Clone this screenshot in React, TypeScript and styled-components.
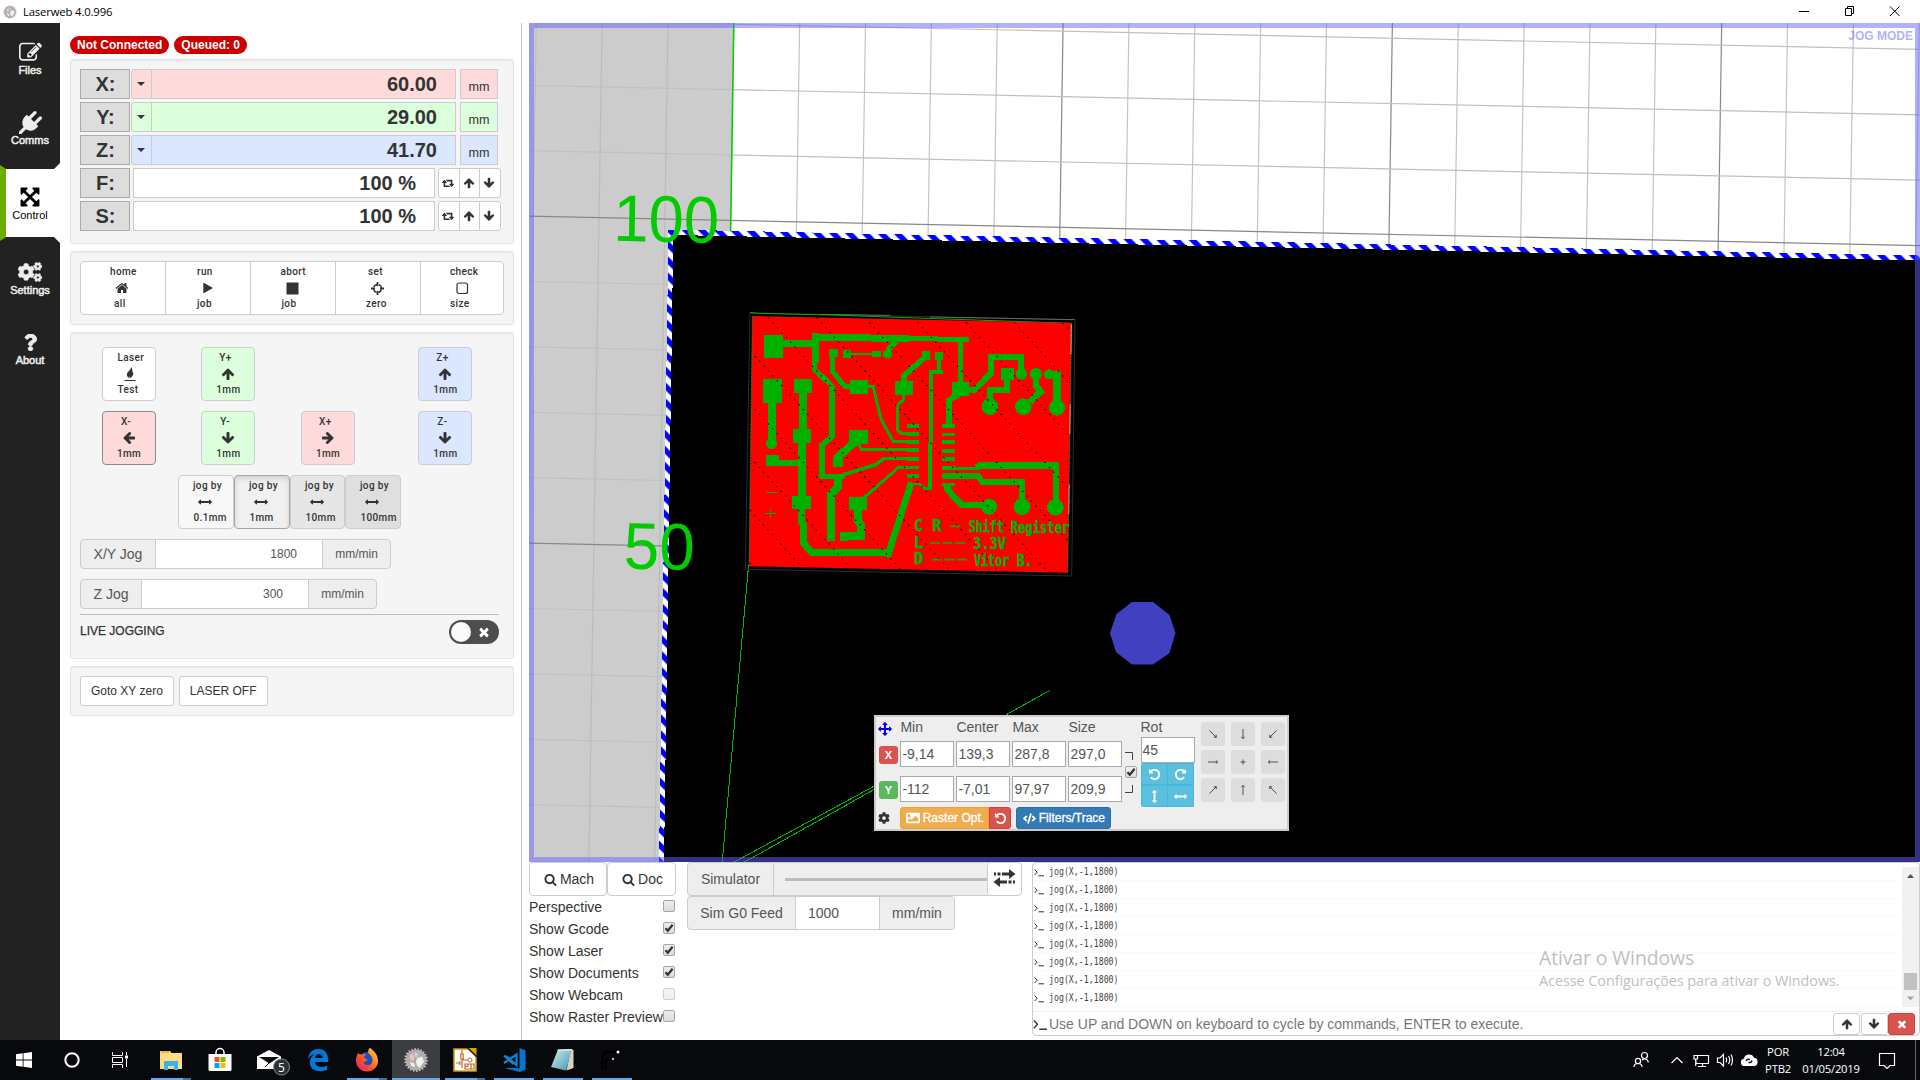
import React from "react";
import styled, { createGlobalStyle, css } from "styled-components";
import { FaCogs, FaCog, FaQuestion, FaImage, FaCode } from "react-icons/fa";

const GlobalStyle = createGlobalStyle`
  *, *::before, *::after { box-sizing: border-box; }
  body {
    margin: 0;
    background: #fff;
    color: #333;
    font: 14px/20px "Liberation Sans", Arial, sans-serif;
    overflow: hidden;
  }
`;

/* ---------- glyphs ---------- */

const glyphs = {
  up: "M1675 971q0 51-37 90l-75 75q-38 38-91 38-54 0-90-38l-294-293v704q0 52-37.5 84.5t-90.5 32.5h-128q-53 0-90.5-32.5t-37.5-84.5v-704l-294 293q-36 38-90 38t-90-38l-75-75q-38-38-38-90 0-53 38-91l651-651q35-37 90-37 54 0 91 37l651 651q37 39 37 91z",
  play: "M1576 927l-1328 738q-23 13-39.5 3t-16.500-36v-1472q0-26 16.500-36t39.500 3l1328 738q23 13 23 31t-23 31z",
  search:
    "M1216 832q0-185-131.500-316.500t-316.500-131.500-316.500 131.500-131.500 316.500 131.500 316.500 316.500 131.500 316.500-131.500 131.500-316.500zm512 832q0 52-38 90t-90 38q-54 0-90-38l-343-342q-179 124-399 124-143 0-273.500-55.500t-225-150-150-225-55.500-273.500 55.500-273.500 150-225 225-150 273.500-55.500 273.500 55.500 225 150 150 225 55.500 273.500q0 220-124 399l343 343q37 37 37 90z",
  times:
    "M1490 1322q0 40-28 68l-136 136q-28 28-68 28t-68-28l-294-294-294 294q-28 28-68 28t-68-28l-136-136q-28-28-28-68t28-68l294-294-294-294q-28-28-28-68t28-68l136-136q28-28 68-28t68 28l294 294 294-294q28-28 68-28t68 28l136 136q28 28 28 68t-28 68l-294 294 294 294q28 28 28 68z",
  home: "M1472 992v480q0 26-19 45t-45 19h-384v-384h-256v384h-384q-26 0-45-19t-19-45v-480q0-1 .5-3t.5-3l575-474 575 474q1 2 1 6zm223-69l-62 74q-8 9-21 11h-3q-13 0-21-7l-692-577-692 577q-12 8-24 7-13-2-21-11l-62-74q-8-10-7-23.500t11-21.500l719-599q32-26 76-26t76 26l244 204v-195q0-14 9-23t23-9h192q14 0 23 9t9 23v408l219 182q10 8 11 21.500t-7 23.500z",
  arrows:
    "M1792 896q0 26-19 45l-256 256q-19 19-45 19t-45-19-19-45v-128h-384v384h128q26 0 45 19t19 45-19 45l-256 256q-19 19-45 19t-45-19l-256-256q-19-19-19-45t19-45 45-19h128v-384h-384v128q0 26-19 45t-45 19-45-19l-256-256q-19-19-19-45t19-45l256-256q19-19 45-19t45 19 19 45v128h384v-384h-128q-26 0-45-19t-19-45 19-45l256-256q19-19 45-19t45 19l256 256q19 19 19 45t-19 45-45 19h-128v384h384v-128q0-26 19-45t45-19 45 19l256 256q19 19 19 45z",
  arrowsH:
    "M1792 896q0 26-19 45l-256 256q-19 19-45 19t-45-19-19-45v-128h-1024v128q0 26-19 45t-45 19-45-19l-256-256q-19-19-19-45t19-45l256-256q19-19 45-19t45 19 19 45v128h1024v-128q0-26 19-45t45-19 45 19l256 256q19 19 19 45z",
  expand:
    "M1411 541l-355 355 355 355 144-144q29-31 70-14 39 17 39 59v448q0 26-19 45t-45 19h-448q-42 0-59-40-17-39 14-69l144-144-355-355-355 355 144 144q31 30 14 69-17 40-59 40h-448q-26 0-45-19t-19-45v-448q0-42 40-59 39-17 69 14l144 144 355-355-355-355-144 144q-19 19-45 19-12 0-24-5-40-17-40-59v-448q0-26 19-45t45-19h448q42 0 59 40 17 39-14 69l-144 144 355 355 355-355-144-144q-31-30-14-69 17-40 59-40h448q26 0 45 19t19 45v448q0 42-39 59-13 5-25 5-26 0-45-19z",
  plug: "M1755 453q37 38 37 90.500t-37 90.500l-401 400 150 150-160 160q-163 163-389.500 186.500t-411.500-100.500l-362 362h-181v-181l362-362q-124-185-100.500-411.500t186.500-389.500l160-160 150 150 400-401q38-37 91-37t90 37 37 90.500-37 90.500l-400 401 234 234 401-400q38-37 91-37t90 37z",
  undo: "M1664 896q0 156-61 298t-164 245-245 164-298 61q-172 0-327-72.500t-264-204.500q-7-10-6.500-22.500t8.500-20.500l137-138q10-9 25-9 16 2 23 12 73 95 179 147t225 52q104 0 198.500-40.500t163.500-109.500 109.500-163.500 40.500-198.500-40.500-198.500-109.500-163.500-163.500-109.500-198.500-40.500q-98 0-188 35.500t-160 101.500l137 138q31 30 14 69-17 40-59 40h-448q-26 0-45-19t-19-45v-448q0-42 40-59 39-17 69 14l130 129q107-101 244.500-156.500t284.500-55.500q156 0 298 61t245 164 164 245 61 298z",
  edit: "M888 1184l116-116-152-152-116 116v56h96v96h56zm440-720q-16-16-33 1l-350 350q-17 17-1 33t33-1l350-350q17-17 1-33zm80 594v190q0 119-84.500 203.500t-203.500 84.500h-832q-119 0-203.500-84.500t-84.500-203.500v-832q0-119 84.500-203.500t203.500-84.500h832q63 0 117 25 15 7 18 23 3 17-9 29l-49 49q-14 14-32 8-23-6-45-6h-832q-66 0-113 47t-47 113v832q0 66 47 113t113 47h832q66 0 113-47t47-113v-126q0-13 9-22l64-64q15-15 35-7t20 29zm-96-738l288 288-672 672h-288v-288zm444 132l-92 92-288-288 92-92q28-28 68-28t68 28l152 152q28 28 28 68t-28 68z",
  retweet:
    "M1280 1504q0 13-9.500 22.500t-22.500 9.500h-960q-8 0-13.500-2t-9-7-5.500-8-3-11.500-1-11.500v-600h-192q-26 0-45-19t-19-45q0-24 15-41l320-384q19-22 49-22t49 22l320 384q15 17 15 41 0 26-19 45t-45 19h-192v384h576q16 0 25 11l160 192q7 11 7 21zm640-416q0 24-15 41l-320 384q-20 23-49 23t-49-23l-320-384q-15-17-15-41 0-26 19-45t45-19h192v-384h-576q-16 0-25-12l-160-192q-7-9-7-20 0-13 9.500-22.500t22.500-9.500h960q8 0 13.500 2t9 7 5.500 8 3 11.500 1 11.500v600h192q26 0 45 19t19 45z",
};
type GlyphName = keyof typeof glyphs;

const GlyphSvg = styled.svg<{ $turn: number; $mirror?: boolean }>`
  display: block;
  flex: none;
  fill: currentColor;
  transform: ${(p) => (p.$mirror ? "scaleX(-1)" : `rotate(${p.$turn}deg)`)};
`;
const Glyph = ({ name, size = 12, turn = 0, mirror }: { name: GlyphName; size?: number; turn?: number; mirror?: boolean }) => (
  <GlyphSvg $turn={turn} $mirror={mirror} width={size} height={size} viewBox={name === "retweet" ? "0 0 1920 1792" : "0 0 1792 1792"}>
    <path d={glyphs[name]} />
  </GlyphSvg>
);

/* ---------- window frame ---------- */

const Window = styled.div`
  width: 1920px;
  height: 1080px;
  display: grid;
  grid-template-rows: 23px 1017px 40px;
  overflow: hidden;
`;
const TitleBar = styled.header`
  display: flex;
  align-items: center;
  padding: 0 0 0 2px;
  background: #fff;
  color: #000;
  font: 11.3px/22px "Open Sans", "Noto Sans", sans-serif;
`;
const TitleText = styled.span`
  margin-left: 5px;
  letter-spacing: -0.15px;
  flex: 1;
`;
const WindowControls = styled.div`
  display: flex;
  width: 138px;
  svg { width: 46px; height: 22px; }
`;
const Body = styled.div`
  display: flex;
  min-height: 0;
`;

/* ---------- sidebar ---------- */

const Sidebar = styled.nav`
  width: 60px;
  background: #222;
  display: flex;
  flex-direction: column;
`;
const SideItem = styled.div<{ $h: number; $top: number }>`
  height: ${(p) => p.$h}px;
  padding-top: ${(p) => p.$top}px;
  display: flex;
  flex-direction: column;
  align-items: center;
  gap: 0;
  color: #eee;
  font-size: 11px;
  line-height: 14px;
  -webkit-text-stroke: 0.5px currentColor;
`;
const ActiveItem = styled(SideItem)`
  color: #000;
  background: linear-gradient(#fff, #fff);
  clip-path: polygon(0 2px, 6px 6px, 54px 6px, 60px 0, 60px 80px, 54px 74px, 6px 74px, 0 78px);
  border-left: 6px solid #6aaf00;
  padding-right: 6px;
  -webkit-text-stroke: 0;
`;
const SideIcon = styled.span`
  height: 24px;
  margin-bottom: -1px;
  display: grid;
  place-items: center;
`;

/* ---------- control pane ---------- */

const ControlPane = styled.section`
  width: 462px;
  border-right: 1px solid #c8c8c8;
  padding: 13px 7px 0 10px;
  background: #fff;
`;
const Badges = styled.div`
  display: flex;
  gap: 5px;
  margin-bottom: 5px;
`;
const Badge = styled.span`
  height: 18px;
  padding: 0 7px;
  border-radius: 9px;
  background: #c00;
  color: #fff;
  font: bold 12px/18px "Liberation Sans", Arial, sans-serif;
`;
const Well = styled.div<{ $h: number }>`
  height: ${(p) => p.$h}px;
  margin-bottom: 7px;
  padding: 9px;
  border: 1px solid #e3e3e3;
  border-radius: 3px;
  background: #f5f5f5;
  box-shadow: inset 0 1px 1px rgba(0, 0, 0, 0.05);
`;
const AxisRow = styled.div`
  display: flex;
  height: 30px;
  margin-bottom: 3px;
`;
const AxisLabel = styled.div`
  width: 50px;
  padding-left: 1px;
  border: 1px solid #aaa;
  background: #ddd;
  font: bold 20px/28px "Liberation Sans", Arial, sans-serif;
  text-align: center;
`;
const AxisDrop = styled.div<{ $bg: string }>`
  width: 21px;
  margin-left: 1px;
  padding-right: 2px;
  border: 1px solid #ccc;
  border-radius: 3px 0 0 3px;
  background: ${(p) => p.$bg};
  display: grid;
  place-items: center;
  &::after {
    content: "";
    border: 4px solid transparent;
    border-top-color: #333;
    border-bottom: 0;
  }
`;
const AxisValue = styled.div<{ $bg: string; $w: number; $gap: number }>`
  width: ${(p) => p.$w}px;
  margin-left: ${(p) => p.$gap}px;
  padding-right: 18px;
  border: 1px solid #ccc;
  background: ${(p) => p.$bg};
  font: bold 20px/28px "Liberation Sans", Arial, sans-serif;
  text-align: right;
`;
const AxisUnit = styled.div<{ $bg: string }>`
  width: 38px;
  margin-left: 4px;
  border: 1px solid #ccc;
  background: ${(p) => p.$bg};
  font-size: 12.6px;
  line-height: 34px;
  text-align: center;
`;
const ButtonGroup = styled.div`
  display: flex;
  margin-left: 3px;
`;
const TinyButton = styled.div`
  width: 21.6px;
  height: 30px;
  margin-right: -1px;
  padding-right: 1px;
  border: 1px solid #ccc;
  background: #fff;
  display: grid;
  place-items: center;
  &:first-child { border-radius: 3px 0 0 3px; }
  &:last-child { border-radius: 0 3px 3px 0; margin-right: 0; }
`;

const stampFont = css`
  font: 500 10px/16px Roboto, "Liberation Sans", sans-serif;
  letter-spacing: 0.35px;
`;
const Stamp = styled.div<{ $w?: number; $bg?: string; $edge?: string; $pressed?: boolean }>`
  width: ${(p) => p.$w ?? 54}px;
  height: 54px;
  padding-top: 2.4px;
  border: 1px solid ${(p) => p.$edge ?? "#ccc"};
  border-radius: 4px;
  background: ${(p) => p.$bg ?? "#fff"};
  box-shadow: ${(p) => (p.$pressed ? "inset 0 3px 5px rgba(0,0,0,.125)" : "none")};
  ${stampFont}
`;
const StampLine = styled.div<{ $start: number }>`
  height: 16px;
  padding-left: ${(p) => p.$start}px;
  display: flex;
  align-items: center;
  white-space: nowrap;
`;
const JobBar = styled.div`
  display: flex;
  width: 424px;
  ${Stamp} { border-radius: 0; margin-right: -1px; padding-top: 2px; }
  ${Stamp}:first-child { border-radius: 4px 0 0 4px; }
  ${Stamp}:last-child { border-radius: 0 4px 4px 0; }
`;
const JogGrid = styled.div`
  display: grid;
  grid-template-columns: 99.3px 99.7px 117.3px 54px;
  grid-template-rows: 54px 54px;
  row-gap: 10px;
  padding: 5px 0 0 22px;
`;
const Blank = styled.span``;
const StepRow = styled.div`
  display: flex;
  margin: 10px 0 10px 98px;
`;
const InputGroup = styled.div<{ $h?: number }>`
  display: flex;
  height: ${(p) => p.$h ?? 30}px;
  width: max-content;
  border: 1px solid #ccc;
  border-radius: 4px;
  background: #eee;
  color: #555;
  overflow: hidden;
`;
const Addon = styled.div<{ $w: number; $small?: boolean }>`
  width: ${(p) => p.$w}px;
  display: flex;
  align-items: center;
  justify-content: center;
  font-size: ${(p) => (p.$small ? 12 : 14)}px;
`;
const Field = styled.div<{ $w: number; $left?: boolean }>`
  width: ${(p) => p.$w}px;
  padding: 0 ${(p) => (p.$left ? 12 : 25)}px 1px;
  border: solid #ccc;
  border-width: 0 1px;
  background: #fff;
  display: flex;
  align-items: center;
  justify-content: ${(p) => (p.$left ? "flex-start" : "flex-end")};
  font-size: ${(p) => (p.$left ? 14 : 12)}px;
`;
const FeedRows = styled.div`
  display: grid;
  gap: 10px;
`;
const LiveRow = styled.div`
  margin-top: 5px;
  width: 419px;
  height: 31px;
  border-top: 1px solid #bbb;
  display: flex;
  justify-content: space-between;
  padding-top: 5px;
  font-size: 12px;
  line-height: 23px;
  -webkit-text-stroke: 0.25px currentColor;
`;
const Toggle = styled.div`
  width: 50px;
  height: 24px;
  padding: 2px 8px 2px 2px;
  border-radius: 12px;
  background: #4d4d4d;
  color: #fff;
  display: flex;
  align-items: center;
  justify-content: space-between;
  &::before {
    content: "";
    width: 20px;
    height: 20px;
    border-radius: 50%;
    background: #fafafa;
  }
`;
const MacroRow = styled.div`
  display: flex;
  gap: 5px;
`;
const Button = styled.div`
  height: 30px;
  padding: 0 10px;
  border: 1px solid #ccc;
  border-radius: 3px;
  background: #fff;
  font-size: 12px;
  line-height: 29px;
  color: #333;
`;

/* ---------- workspace ---------- */

const Workspace = styled.main`
  width: 1398px;
  padding-left: 7px;
  display: grid;
  grid-template-rows: 839px 178px;
`;
const Viewport = styled.div`
  position: relative;
  width: 1391px;
  height: 839px;
  overflow: hidden;
`;
const Scene = styled.svg`
  display: block;
`;
const ModeFrame = styled.div`
  position: absolute;
  inset: 0;
  border: 5px solid rgba(100, 100, 255, 0.5);
  padding: 1px 2px;
  color: rgba(100, 100, 255, 0.5);
  font: bold 12px/15px "Liberation Sans", Arial, sans-serif;
  text-align: right;
`;

const TransformPanel = styled.div`
  position: absolute;
  left: 345px;
  top: 692px;
  width: 415px;
  height: 116px;
  padding: 0 0 0 2px;
  border: 2px solid #ccc;
  background: #eee;
  display: flex;
  font-size: 14px;
  color: #555;
`;
const AxisTable = styled.div`
  width: 244px;
  display: grid;
  grid-template-columns: 20.4px repeat(4, 54px);
  grid-template-rows: 24px 26px 9px 26px 5px 22px;
  column-gap: 2px;
`;
const Head = styled.div`
  line-height: 20px;
`;
const Corner = styled.div<{ $color: string }>`
  display: flex;
  align-items: center;
  color: ${(p) => p.$color};
`;
const AxisTag = styled.div<{ $bg: string }>`
  width: 19px;
  height: 18px;
  margin-top: 5px;
  margin-left: 1px;
  border-radius: 3px;
  background: ${(p) => p.$bg};
  color: #fff;
  font: bold 11px/18px "Liberation Sans", Arial, sans-serif;
  text-align: center;
`;
const NumberBox = styled.div`
  height: 26px;
  padding-left: 1px;
  border: 1px solid #a9a9a9;
  background: #fff;
  line-height: 24px;
`;
const Gap = styled.div`
  grid-column: 1 / -1;
`;
const RasterRow = styled.div`
  grid-column: 2 / -1;
  display: flex;
`;
const ColorButton = styled.div<{ $bg: string; $edge: string; $w: number; $r: string; $ml?: number }>`
  width: ${(p) => p.$w}px;
  height: 22px;
  margin-left: ${(p) => p.$ml ?? 0}px;
  border: 1px solid ${(p) => p.$edge};
  border-radius: ${(p) => p.$r};
  background: ${(p) => p.$bg};
  color: #fff;
  display: flex;
  align-items: center;
  justify-content: center;
  gap: 3px;
  font-size: 12px;
  white-space: nowrap;
  -webkit-text-stroke: 0.3px #fff;
`;
const LinkColumn = styled.div`
  width: 18.5px;
  padding: 35px 0 0 3px;
  color: #333;
  display: flex;
  flex-direction: column;
  gap: 5.5px;
`;
const RotColumn = styled.div`
  width: 54px;
  margin-right: 6px;
`;
const RotGrid = styled.div`
  display: grid;
  grid-template-columns: 26px 27px;
  border-radius: 3px;
  overflow: hidden;
`;
const AlignGrid = styled.div`
  display: grid;
  grid-template-columns: repeat(3, 24px);
  grid-auto-rows: 24px;
  gap: 4px 6px;
  padding-top: 5px;
`;
const AlignButton = styled.div`
  border-radius: 3px;
  background: #ddd;
  display: grid;
  place-items: center;
  svg { display: block; }
`;

/* ---------- bottom dock ---------- */

const Dock = styled.div`
  display: grid;
  grid-template-columns: 147px 335px 888px;
  column-gap: 11px;
  justify-content: start;
`;
const ZoomButtons = styled.div`
  display: flex;
`;
const ZoomButton = styled.div<{ $w: number }>`
  width: ${(p) => p.$w}px;
  height: 34px;
  padding-left: 2px;
  border: 1px solid #ccc;
  border-radius: 4px;
  display: flex;
  align-items: center;
  justify-content: center;
  gap: 3px;
  color: #333;
`;
const CheckRow = styled.div`
  height: 22px;
  display: flex;
  justify-content: space-between;
  align-items: center;
  line-height: 22px;
  white-space: nowrap;
`;
const Box = styled.span<{ $faint?: boolean }>`
  flex: none;
  width: 12px;
  height: 12px;
  margin: 0 1px 2px 0;
  border: 1px solid ${(p) => (p.$faint ? "#d0d0d0" : "#a5a5a5")};
  border-radius: 2px;
  background: linear-gradient(${(p) => (p.$faint ? "#f5f5f5, #efefef" : "#eee, #dcdcdc")});
  svg { display: block; margin: -1px; }
`;
const Slider = styled.div`
  width: 214px;
  padding-left: 11px;
  border-left: 1px solid #ccc;
  display: flex;
  align-items: center;
  &::after {
    content: "";
    flex: 1;
    height: 3px;
    background: #bbb;
  }
`;
const SwapButton = styled.div`
  width: 34px;
  padding: 0 1px 2px 0;
  border-left: 1px solid #ccc;
  border-radius: 4px;
  background: #fff;
  display: grid;
  place-items: center;
`;
const Console = styled.div`
  width: 888px;
  margin-left: -1px;
  height: 174px;
  border: 1px solid #ccc;
  border-radius: 4px;
  display: grid;
  grid-template-rows: 149px 23px;
`;
const LogArea = styled.div`
  display: flex;
  justify-content: space-between;
  padding-top: 0;
  border-bottom: 1px dotted #e4e4e4;
`;
const Log = styled.div`
  width: 866px;
`;
const LogLine = styled.div`
  height: 18px;
  padding: 0 0 0 1px;
  border-bottom: 1px solid #fafafa;
  display: flex;
  align-items: center;
  gap: 5px;
  color: #333;
`;
const LogText = styled.span`
  font: 9.6px/16px "DejaVu Sans Mono", monospace;
  color: #444;
  transform: scaleX(0.86);
  transform-origin: left;
`;
const Scrollbar = styled.div`
  width: 17px;
  height: 140px;
  margin-top: 4px;
  background: #f1f1f1;
`;
const Prompt = styled.div`
  display: flex;
  align-items: center;
  padding-left: 0;
  color: #777;
`;
const PromptText = styled.span`
  flex: 1;
  margin-left: 2px;
`;
const HistoryButton = styled.div<{ $danger?: boolean }>`
  width: 27px;
  height: 22px;
  margin-right: ${(p) => (p.$danger ? 4 : 0.5)}px;
  border: 1px solid ${(p) => (p.$danger ? "#d43f3a" : "#ccc")};
  border-radius: 3px;
  background: ${(p) => (p.$danger ? "#d9534f" : "#fff")};
  color: ${(p) => (p.$danger ? "#fff" : "#333")};
  display: grid;
  place-items: center;
`;
const Watermark = styled.div`
  position: absolute;
  left: 1539px;
  top: 944px;
  color: #bfbfbf;
  font: 15px/20px "Open Sans", "Noto Sans", sans-serif;
  white-space: nowrap;
`;
const WatermarkTitle = styled.div`
  font-size: 19.4px;
  line-height: 28px;
  letter-spacing: -0.1px;
`;
const WatermarkBody = styled.div`
  font-size: 14.4px;
  letter-spacing: -0.05px;
  line-height: 18px;
`;

/* ---------- taskbar ---------- */

const Taskbar = styled.footer`
  background: #08090c;
  display: flex;
  color: #fff;
`;
const TaskSlot = styled.div<{ $active?: boolean; $gap?: number }>`
  width: 48px;
  height: 40px;
  margin-left: ${(p) => p.$gap ?? 0}px;
  background: ${(p) => (p.$active ? "#3b3d40" : "transparent")};
  display: flex;
  flex-direction: column;
  align-items: center;
  svg { display: block; margin: 4px 0 2px; }
`;
const Running = styled.i<{ $w: number; $stack?: boolean }>`
  width: ${(p) => p.$w}px;
  height: 2px;
  background: ${(p) => (p.$stack ? "linear-gradient(90deg, #6aa6e0 32px, #46709a 32px)" : "#6aa6e0")};
`;
const Tray = styled.div`
  margin-left: auto;
  width: 292px;
  display: flex;
  align-items: center;
  font: 11.3px/17px "Open Sans", "Noto Sans", sans-serif;
  text-align: center;
  svg { flex: none; }
`;
const TrayText = styled.div<{ $w: number; $ml: number }>`
  width: ${(p) => p.$w}px;
  margin-left: ${(p) => p.$ml}px;
  letter-spacing: -0.25px;
`;
const ShowDesktop = styled.div`
  margin-left: auto;
  width: 5px;
  height: 40px;
  border-left: 1px solid #666;
`;

/* ---------- data ---------- */

const axes = [
  { name: "X:", value: "60.00", bg: "#ffdada" },
  { name: "Y:", value: "29.00", bg: "#dcffdc" },
  { name: "Z:", value: "41.70", bg: "#dbe6ff" },
];
const red = "#ffdada";
const green = "#dcffdc";
const blue = "#dbe6ff";

const Marker = ({ kind }: { kind: string }) => {
  if (kind === "stop") return <svg width="13" height="13"><rect x=".5" y=".5" width="12" height="12" fill="#333" /></svg>;
  if (kind === "zero")
    return (
      <svg width="13" height="13" viewBox="0 0 13 13" fill="none" stroke="#333" strokeWidth="1.5">
        <circle cx="6.500" cy="6.500" r="4" strokeDasharray="4.300 1.983" strokeDashoffset="-1" />
        <path d="M6.500 0v4M6.500 9v4M0 6.500h4M9 6.500h4" strokeWidth="1.800" />
      </svg>
    );
  if (kind === "size")
    return <svg width="13" height="13"><rect x="1" y="1" width="10.500" height="10.500" rx="2" fill="none" stroke="#333" strokeWidth="1.200" /></svg>;
  if (kind === "fire")
    return (
      <svg width="12" height="15" viewBox="0 0 12 15">
        <path d="M7 0C7.400 2 5.600 3 3.900 5 2.200 7.100 2.600 9.200 5 11.600c-.5-1.100-.3-1.700.3-2.300.3.700.3 1.400.2 2.300C8.800 9.800 10 7.300 8.900 4.300c-.3.700-.6 1-1 1.200C8.700 3.400 8.500 1.300 7 0z" fill="#333" />
        <path d="M.5 13.500h11" stroke="#333" strokeWidth="1" />
      </svg>
    );
  return null;
};

const jobs = [
  { top: "home", a: 29, icon: <Glyph name="home" size={14} />, i: 34, bottom: "all", b: 33 },
  { top: "run", a: 31, icon: <Glyph name="play" size={12} />, i: 35.5, bottom: "job", b: 31 },
  { top: "abort", a: 29.5, icon: <Marker kind="stop" />, i: 34.5, bottom: "job", b: 30.5 },
  { top: "set", a: 32, icon: <Marker kind="zero" />, i: 35, bottom: "zero", b: 30 },
  { top: "check", a: 29, icon: <Marker kind="size" />, i: 34.5, bottom: "size", b: 29 },
];
const steps = [
  { label: "0.1mm", bg: "#f8f8f8", w: 56 },
  { label: "1mm", bg: "#f0f0f0", pressed: true, w: 56 },
  { label: "10mm", bg: "#e6e6e6", w: 55 },
  { label: "100mm", bg: "#dfdfdf", w: 56 },
];
const checks = [
  { label: "Perspective", on: false },
  { label: "Show Gcode", on: true },
  { label: "Show Laser", on: true },
  { label: "Show Documents", on: true },
  { label: "Show Webcam", on: false, faint: true },
  { label: "Show Raster Preview", on: false },
];

const Jog = ({ label, turn, bg, a, edge }: { label: string; turn: number; bg: string; a: number; edge?: string }) => (
  <Stamp $bg={bg} $edge={edge}>
    <StampLine $start={a}>{label}</StampLine>
    <StampLine $start={19}><Glyph name="up" size={14} turn={turn} /></StampLine>
    <StampLine $start={14}>1mm</StampLine>
  </Stamp>
);

const Check = ({ on, faint }: { on: boolean; faint?: boolean }) => (
  <Box $faint={faint}>
    {on && (
      <svg width="12" height="12" viewBox="0 0 12 12">
        <path d="M2.500 6.200l2.300 2.600L9.600 2.800" fill="none" stroke="#333" strokeWidth="2.200" />
      </svg>
    )}
  </Box>
);

const PromptIcon = ({ w = 10 }: { w?: number }) => (
  <svg width={w} height={w} viewBox="0 0 10 10" fill="none" stroke="#333" strokeWidth="1">
    <path d="M.6 2.500l2.600 2.700L.6 8M4.500 8.800h5.500" />
  </svg>
);

const Gear = ({ size, zoom = 1 }: { size: number; zoom?: number }) => (
  <svg width={size} height={size} viewBox="0 0 32 32">
    <g transform={`translate(16 16) scale(${zoom}) translate(-16 -16)`}>
      <circle cx="16" cy="16" r="12" fill="#a8a8a8" stroke="#c4c4c4" strokeWidth="3" strokeDasharray="1.600 1.800" />
      <circle cx="16" cy="16" r="11" fill="#b0adac" />
      <path d="M9 10l7-3 3 3-2 3-3 1-1 4-4-3z" fill="#d9c9c6" />
      <path d="M17 14l6-2 2 6-5 7-3-3-1-4zM9 18l5 2 1 4-4-1z" fill="#f3f1f0" />
      <path d="M13 9l3 6-4 3" stroke="#cc8f88" fill="none" />
    </g>
  </svg>
);

/* ---------- scene ---------- */

const skewX = -0.0157;
const skewY = 0.0212;
const columns = Array.from({ length: 22 }, (_, i) => i - 3);
const rows = Array.from({ length: 13 }, (_, i) => i);

const GridLines = () => (
  <g strokeWidth="1.200">
    {columns.map((c) => {
      const x = 733.8 + c * 65.86;
      const major = c !== 0 && c % 5 === 0;
      return <line key={c} x1={x} y1={23} x2={x + skewX * 839} y2={862} stroke={major ? "#888" : c < 0 ? "#bcbcbc" : "#c4c4c4"} />;
    })}
    {rows.map((r) => {
      const y = 19.9 + r * 65.4;
      const major = r === 3 || r === 8;
      return <line key={r} x1={529} y1={y} x2={1920} y2={y + skewY * 1391} stroke={major ? "#888" : "#c0c0c0"} />;
    })}
  </g>
);

const trackColor = "#00b200";
const tracks: [string, number][] = [
  ["M155 147H262", 21],
  ["M257 115V205", 23],
  ["M253 200V222L307 275", 15],
  ["M246 126L536 131", 21],
  ["M530 131L716 133", 15],
  ["M692 130V268", 17],
  ["M498 138L476 162L472 190", 17],
  ["M309 180V230L346 276H365", 15],
  ["M352 177H440", 6],
  ["M413 276H430L452 370L490 440H567", 9],
  ["M587 185L522 242V262", 17],
  ["M520 298V315L503 330V405L515 416H567", 9],
  ["M627 190V230", 12],
  ["M640 232H597", 12],
  ["M604 228L600 584", 12],
  ["M605 580H585L568 567H545", 8],
  ["M714 284H735L782 235V187H874V240", 18],
  ["M832 250V284H780V325", 18],
  ["M918 240V272L933 290L900 320", 19],
  ["M957 241H981V330", 23],
  ["M685 300L657 315V393", 17],
  ["M126 320V440", 24],
  ["M218 290V405", 24],
  ["M216 440V606", 24],
  ["M214 638V680L221 690V745L247 774H478", 21],
  ["M472 786L544 562", 20],
  ["M144 505H208", 19],
  ["M378 438L325 485V515", 24],
  ["M384 446L394 463H567", 8],
  ["M306 272V425L276 450V548", 17],
  ["M270 545H345", 14],
  ["M338 540L440 508L460 491H567", 11],
  ["M325 538V575L303 597V738", 24],
  ["M567 518H505L400 610", 9],
  ["M385 644V680L393 690V724H340", 23],
  ["M638 520H745", 9],
  ["M740 518L750 511H978V615", 20],
  ["M638 543H745L757 562H876V615", 18],
  ["M653 565V585L697 631H770", 19],
  ["M108 592H141", 3],
  ["M105 656H138M122 641V670", 4],
];
const pads: [number, number, number, number][] = [
  [103, 120, 56, 68], [298, 163, 25, 24], [339, 165, 25, 24], [427, 168, 25, 18], [460, 168, 25, 18],
  [361, 255, 53, 42], [575, 168, 25, 28], [495, 258, 54, 42], [616, 172, 23, 22], [665, 262, 52, 41],
  [813, 219, 39, 36], [99, 252, 57, 71], [192, 252, 54, 42], [190, 402, 54, 42], [186, 603, 57, 38],
  [107, 481, 39, 32], [358, 405, 55, 42], [356, 606, 54, 40], [331, 711, 22, 27], [310, 485, 28, 30],
];
const vias: [number, number, number][] = [
  [125, 445, 17], [874, 237, 17], [918, 237, 18], [957, 238, 15], [780, 335, 25], [880, 335, 25],
  [981, 338, 24], [777, 635, 24], [876, 635, 25], [976, 637, 25],
];
const pinRows = [393, 418, 441, 467, 492, 518, 543, 568];

const Circuit = () => (
  <g transform="translate(730 295) scale(.33333)">
    <path d="M60 54L1035 74L1025 843L46 823Z" fill="none" stroke="#2c2c2c" strokeWidth="3" />
    <path d="M270 58L480 61M600 66L1035 74" stroke="#777" strokeWidth="2.500" />
    <path d="M60 52L84 55L300 60L1025 85" fill="none" stroke={trackColor} strokeWidth="3" />
    <path d="M67 63L1025 84L1013 833L57 814Z" fill="#f00" />
    <path d="M67 63L57 814M1025 84L1013 833" stroke={trackColor} strokeWidth="3" strokeDasharray="3 3" />
    <path d="M1024 88L1016 690" stroke="#ddd" strokeWidth="2" strokeDasharray="90 150" />
    <g fill="none" stroke={trackColor} shapeRendering="crispEdges">
      {tracks.map(([d, w]) => <path key={d} d={d} strokeWidth={w} />)}
    </g>
    <g fill={trackColor} shapeRendering="crispEdges">
      {pads.map(([x, y, w, h]) => <rect key={`${x}-${y}`} x={x} y={y} width={w} height={h} />)}
      {vias.map(([x, y, r]) => <circle key={`${x}-${y}`} cx={x} cy={y} r={r} />)}
      {pinRows.map((y) => (
        <g key={y}>
          {y < 560 && <rect x="531" y={y - 5} width="36" height="10" />}
          <rect x="637" y={y - 5} width="37" height="11" />
        </g>
      ))}
    </g>
    <g clipPath="url(#board)" stroke="#000" strokeWidth="3.200" strokeDasharray="4.500 15">
      {Array.from({ length: 12 }, (_, i) => 115 + (i - 5) * 145).map((x) => (
        <line key={x} x1={x} y1={68} x2={x + 700} y2={838} />
      ))}
    </g>
    <g fill={trackColor} stroke={trackColor} strokeWidth="1.500" fontFamily="'DejaVu Sans Mono', monospace" fontSize="46" fontWeight="bold">
      <text x="552" y="708">C</text>
      <text x="607" y="708">R</text>
      <text x="716" y="711" textLength="106" lengthAdjust="spacingAndGlyphs">Shift</text>
      <text x="842" y="714" textLength="176" lengthAdjust="spacingAndGlyphs">Register</text>
      <text x="552" y="758">L</text>
      <text x="730" y="762" textLength="98" lengthAdjust="spacingAndGlyphs">3.3V</text>
      <text x="552" y="808">D</text>
      <text x="732" y="812" textLength="106" lengthAdjust="spacingAndGlyphs">Vitor</text>
      <text x="860" y="812" textLength="48" lengthAdjust="spacingAndGlyphs">B.</text>
      <path d="M660 694H690M600 744H630M638 744H667M675 744H705M606 794H636M644 794H673M681 794H711" strokeWidth="5" />
    </g>
  </g>
);

const Bed = () => (
  <Scene width="1391" height="839" viewBox="529 23 1391 839">
    <defs>
      <pattern id="hazard" width="16.030" height="16.030" patternUnits="userSpaceOnUse" patternTransform="translate(2.800 0)">
        <path d="M0 0h8.015l8.015 8.015v8.015zM0 8.015v8.015h8.015z" fill="#00f" />
      </pattern>
      <clipPath id="board"><path d="M67 63L1025 84L1013 833L57 814Z" /></clipPath>
    </defs>
    <rect x="529" y="23" width="1391" height="839" fill="#fff" />
    <path d="M529 23H733.800L720.600 862H529Z" fill="#ccc" />
    <GridLines />
    <line x1="733.800" y1="23" x2="730.600" y2="232" stroke="#00cc00" strokeWidth="1.500" />
    <path d="M668.500 229.500L1920 255.500V862H659Z" fill="#fff" shapeRendering="crispEdges" />
    <path d="M668.500 229.500L1920 255.500V862H659Z" fill="url(#hazard)" shapeRendering="crispEdges" />
    <path d="M673.300 235L1920 260.500V862H664Z" fill="#000" shapeRendering="crispEdges" />
    <g fill="none" stroke="#00b800" strokeWidth="1">
      <path d="M748.600 565L722.200 862M734.300 862L875 785.700L1005.700 715L1050 690.300M744.600 862L875 789L905 772" shapeRendering="crispEdges" />
    </g>
    <Circuit />
    <path d="M1132 602H1153L1169.500 615L1175.500 633L1169.500 653L1153 664.500H1132L1116 652L1110 633L1116.500 614Z" fill="#4040c0" />
    <g fill="#00cc00" fontFamily="'Liberation Sans', Arial, sans-serif" fontSize="66">
      <text transform="matrix(.96 .021 -.015 1 613 240.800)">100</text>
      <text transform="matrix(.965 .021 -.015 1 623.500 568.500)">50</text>
    </g>
  </Scene>
);

const AlignArrow = ({ angle, plus }: { angle: number; plus?: boolean }) => (
  <svg width="12" height="12" viewBox="0 0 12 12" fill="none" stroke="#444" strokeWidth=".9">
    {plus ? <path d="M3.500 6h5M6 3.500v5" /> : <path d="M1 6h9.500M8.800 4.300l1.900 1.700-1.900 1.700" transform={`rotate(${angle} 6 6)`} />}
  </svg>
);

/* ---------- app ---------- */

const App = () => (
  <Window>
    <GlobalStyle />
    <TitleBar>
      <Gear size={16} />
      <TitleText>Laserweb 4.0.996</TitleText>
      <WindowControls>
        <svg viewBox="0 0 46 22" stroke="#000" fill="none"><path d="M17 10.500h10" /></svg>
        <svg viewBox="0 0 46 22" stroke="#000" fill="none"><path d="M17.500 7.500h6v7h-6zM19.500 7V5.500h6v7H24" /></svg>
        <svg viewBox="0 0 46 22" stroke="#000" fill="none"><path d="M16 5.500l9.500 9.500M25.500 5.500L16 15" /></svg>
      </WindowControls>
    </TitleBar>

    <Body>
      <Sidebar>
        <SideItem $h={70} $top={17}><SideIcon><Glyph name="edit" size={23} /></SideIcon>Files</SideItem>
        <SideItem $h={70} $top={17}><SideIcon><Glyph name="plug" size={23} /></SideIcon>Comms</SideItem>
        <ActiveItem $h={80} $top={22}><SideIcon><Glyph name="expand" size={22} /></SideIcon>Control</ActiveItem>
        <SideItem $h={70} $top={17}><SideIcon><FaCogs size={24} stroke="currentColor" strokeWidth={16} /></SideIcon>Settings</SideItem>
        <SideItem $h={70} $top={17}><SideIcon><FaQuestion size={17} stroke="currentColor" strokeWidth={24} /></SideIcon>About</SideItem>
      </Sidebar>

      <ControlPane>
        <Badges><Badge>Not Connected</Badge><Badge>Queued: 0</Badge></Badges>

        <Well $h={185}>
          {axes.map((a) => (
            <AxisRow key={a.name}>
              <AxisLabel>{a.name}</AxisLabel>
              <AxisDrop $bg={a.bg} />
              <AxisValue $bg={a.bg} $w={305} $gap={-1}>{a.value}</AxisValue>
              <AxisUnit $bg={a.bg}>mm</AxisUnit>
            </AxisRow>
          ))}
          {["F:", "S:"].map((n) => (
            <AxisRow key={n}>
              <AxisLabel>{n}</AxisLabel>
              <AxisValue $bg="#fff" $w={302} $gap={3}>100 %</AxisValue>
              <ButtonGroup>
                <TinyButton><Glyph name="retweet" size={12} /></TinyButton>
                <TinyButton><Glyph name="up" size={12} /></TinyButton>
                <TinyButton><Glyph name="up" size={12} turn={180} /></TinyButton>
              </ButtonGroup>
            </AxisRow>
          ))}
        </Well>

        <Well $h={74}>
          <JobBar>
            {jobs.map((j, i) => (
              <Stamp key={i} $w={i === 4 ? 84 : 86}>
                <StampLine $start={j.a}>{j.top}</StampLine>
                <StampLine $start={j.i}>{j.icon}</StampLine>
                <StampLine $start={j.b}>{j.bottom}</StampLine>
              </Stamp>
            ))}
          </JobBar>
        </Well>

        <Well $h={327}>
          <JogGrid>
            <Stamp>
              <StampLine $start={14.5}>Laser</StampLine>
              <StampLine $start={20.5}><Marker kind="fire" /></StampLine>
              <StampLine $start={14.5}>Test</StampLine>
            </Stamp>
            <Jog label="Y+" turn={0} bg={green} a={17} />
            <Blank />
            <Jog label="Z+" turn={0} bg={blue} a={17} />
            <Jog label="X-" turn={270} bg={red} a={18} edge="#8c8c8c" />
            <Jog label="Y-" turn={180} bg={green} a={18} />
            <Jog label="X+" turn={90} bg={red} a={17} />
            <Jog label="Z-" turn={180} bg={blue} a={18} />
          </JogGrid>
          <StepRow>
            {steps.map((s) => (
              <Stamp key={s.label} $w={s.w} $bg={s.bg} $edge={s.pressed ? "#a5a5a5" : "#ccc"} $pressed={s.pressed}>
                <StampLine $start={14}>jog by</StampLine>
                <StampLine $start={19}><Glyph name="arrowsH" size={14} /></StampLine>
                <StampLine $start={14.5}>{s.label}</StampLine>
              </Stamp>
            ))}
          </StepRow>
          <FeedRows>
            <InputGroup><Addon $w={74}>X/Y Jog</Addon><Field $w={168}>1800</Field><Addon $small $w={67}>mm/min</Addon></InputGroup>
            <InputGroup><Addon $w={60}>Z Jog</Addon><Field $w={168}>300</Field><Addon $small $w={67}>mm/min</Addon></InputGroup>
          </FeedRows>
          <LiveRow>LIVE JOGGING<Toggle><Glyph name="times" size={14} /></Toggle></LiveRow>
        </Well>

        <Well $h={50}>
          <MacroRow><Button>Goto XY zero</Button><Button>LASER OFF</Button></MacroRow>
        </Well>
      </ControlPane>

      <Workspace>
        <Viewport>
          <Bed />
          <ModeFrame>JOG MODE</ModeFrame>
          <TransformPanel>
            <AxisTable>
              <Corner $color="#00f"><Glyph name="arrows" size={14} /></Corner>
              <Head>Min</Head><Head>Center</Head><Head>Max</Head><Head>Size</Head>
              <AxisTag $bg="#d9534f">X</AxisTag>
              <NumberBox>-9,14</NumberBox><NumberBox>139,3</NumberBox><NumberBox>287,8</NumberBox><NumberBox>297,0</NumberBox>
              <Gap />
              <AxisTag $bg="#5cb85c">Y</AxisTag>
              <NumberBox>-112</NumberBox><NumberBox>-7,01</NumberBox><NumberBox>97,97</NumberBox><NumberBox>209,9</NumberBox>
              <Gap />
              <Corner $color="#333"><FaCog size={12} /></Corner>
              <RasterRow>
                <ColorButton $w={89} $bg="#f0ad4e" $edge="#eea236" $r="3px 0 0 3px"><FaImage size={14} />Raster Opt.</ColorButton>
                <ColorButton $w={22} $bg="#d9534f" $edge="#d43f3a" $r="0 3px 3px 0"><Glyph name="undo" size={13} /></ColorButton>
                <ColorButton $w={95} $ml={5} $bg="#337ab7" $edge="#2e6da4" $r="3px"><FaCode size={13} />Filters/Trace</ColorButton>
              </RasterRow>
            </AxisTable>
            <LinkColumn>
              <svg width="8" height="8" fill="none" stroke="#444"><path d="M0 .5h7.500V8" /></svg>
              <Check on />
              <svg width="8" height="8" fill="none" stroke="#444"><path d="M0 7.500h7.500V0" /></svg>
            </LinkColumn>
            <RotColumn>
              <Head>Rot</Head>
              <NumberBox>45</NumberBox>
              <RotGrid>
                <ColorButton $w={27} $bg="#5bc0de" $edge="#46b8da" $r="0"><Glyph name="undo" size={13} /></ColorButton>
                <ColorButton $w={27} $bg="#5bc0de" $edge="#46b8da" $r="0"><Glyph name="undo" size={13} mirror /></ColorButton>
                <ColorButton $w={27} $bg="#5bc0de" $edge="#46b8da" $r="0"><Glyph name="arrowsH" size={13} turn={90} /></ColorButton>
                <ColorButton $w={27} $bg="#5bc0de" $edge="#46b8da" $r="0"><Glyph name="arrowsH" size={13} /></ColorButton>
              </RotGrid>
            </RotColumn>
            <AlignGrid>
              {[45, 90, 135, 0, -1, 180, 315, 270, 225].map((a) => (
                <AlignButton key={a}><AlignArrow angle={a} plus={a === -1} /></AlignButton>
              ))}
            </AlignGrid>
          </TransformPanel>
        </Viewport>

        <Dock>
          <div>
            <ZoomButtons>
              <ZoomButton $w={78}><Glyph name="search" size={13} />Mach</ZoomButton>
              <ZoomButton $w={69}><Glyph name="search" size={13} />Doc</ZoomButton>
            </ZoomButtons>
            {checks.map((c) => (
              <CheckRow key={c.label}>{c.label}<Check on={c.on} faint={c.faint} /></CheckRow>
            ))}
          </div>
          <div>
            <InputGroup $h={34}>
              <Addon $w={85}>Simulator</Addon>
              <Slider />
              <SwapButton>
                <svg width="23" height="18" viewBox="0 0 23 18" fill="#333">
                  <path d="M1 3.500h2v3H1zM4.500 3.500h3v3h-3zM9 3.500h7V0l6.500 5-6.500 5V6.500H9zM22 11.500h-2v3h2zM18.500 11.500h-3v3h3zM14 11.500H7V8L.5 13 7 18v-3.500h7z" />
                </svg>
              </SwapButton>
            </InputGroup>
            <InputGroup $h={34}>
              <Addon $w={107}>Sim G0 Feed</Addon>
              <Field $w={85} $left>1000</Field>
              <Addon $w={74}>mm/min</Addon>
            </InputGroup>
          </div>
          <Console>
            <LogArea>
              <Log>
                {Array.from({ length: 8 }, (_, i) => (
                  <LogLine key={i}><PromptIcon /><LogText>jog(X,-1,1800)</LogText></LogLine>
                ))}
              </Log>
              <Scrollbar>
                <svg width="17" height="140">
                  <path d="M5 11l3.500-4 3.500 4z" fill="#505050" />
                  <rect x="2" y="106" width="13" height="17" fill="#c1c1c1" />
                  <path d="M5 129.500l3.500 4 3.500-4z" fill="#a3a3a3" />
                </svg>
              </Scrollbar>
            </LogArea>
            <Prompt>
              <PromptIcon w={14} />
              <PromptText>Use UP and DOWN on keyboard to cycle by commands, ENTER to execute.</PromptText>
              <HistoryButton><Glyph name="up" size={12} /></HistoryButton>
              <HistoryButton><Glyph name="up" size={12} turn={180} /></HistoryButton>
              <HistoryButton $danger><Glyph name="times" size={12} /></HistoryButton>
            </Prompt>
          </Console>
        </Dock>
      </Workspace>
    </Body>

    <Watermark>
      <WatermarkTitle>Ativar o Windows</WatermarkTitle>
      <WatermarkBody>Acesse Configurações para ativar o Windows.</WatermarkBody>
    </Watermark>

    <Taskbar>
      <TaskSlot>
        <svg width="32" height="32" viewBox="0 0 32 32" fill="#fff"><path d="M8 10.300l6.700-1v6.300H8zM15.500 9.200L24 8v7.600h-8.500zM8 16.400h6.700v6.300L8 21.700zM15.500 16.400H24V24l-8.500-1.200z" /></svg>
      </TaskSlot>
      <TaskSlot>
        <svg width="32" height="32" viewBox="0 0 32 32"><circle cx="16" cy="16" r="6.700" fill="none" stroke="#fff" strokeWidth="2" /></svg>
      </TaskSlot>
      <TaskSlot>
        <svg width="32" height="32" viewBox="0 0 32 32" fill="none" stroke="#fff"><path d="M8.500 8v3.500h10V8M8.500 24v-3.500h10V24M8.500 13.500h10v5h-10zM22.500 8v3M22.500 15v8" /><rect x="21.500" y="12" width="2" height="2" fill="#fff" /></svg>
      </TaskSlot>
      <TaskSlot $gap={3}>
        <svg width="32" height="32" viewBox="0 0 32 32"><path d="M5 7h10l1.500 2H27v16H5z" fill="#fbdd85" /><path d="M6 7h8v2H6z" fill="#e8b43a" /><path d="M9 26v-9h14v9h-4v-4h-6v4z" fill="#40b0e6" /></svg>
        <Running $w={40} $stack />
      </TaskSlot>
      <TaskSlot $gap={1}>
        <svg width="32" height="32" viewBox="0 0 32 32"><path d="M12 11V8.500a4 4 0 018 0V11" fill="none" stroke="#fff" strokeWidth="1.500" /><path d="M4.500 10h23v15.500q0 1.500-1.500 1.500H6q-1.500 0-1.500-1.500z" fill="#fff" /><path d="M10.500 13h5v5h-5z" fill="#f25022" /><path d="M16.500 13h5v5h-5z" fill="#7fba00" /><path d="M10.500 19h5v5h-5z" fill="#00a4ef" /><path d="M16.500 19h5v5h-5z" fill="#ffb900" /></svg>
      </TaskSlot>
      <TaskSlot $gap={1}>
        <svg width="44" height="32" viewBox="0 0 44 32"><path d="M10 12.500L22 6l12 6.500V25H10z" fill="#fff" /><path d="M12 13h20l-9.500 6.500z" fill="#08090c" /><path d="M22 19l-4 4" stroke="#08090c" /><circle cx="34.500" cy="23" r="8" fill="#2d3033" stroke="#888" /><text x="34.500" y="27.500" fontSize="12" fill="#fff" textAnchor="middle" fontFamily="'Open Sans', sans-serif">5</text></svg>
      </TaskSlot>
      <TaskSlot $gap={1}>
        <svg width="32" height="32" viewBox="0 0 32 32"><path d="M6 15C7 8 11 5 16.500 5 23 5 26 9.500 26 15v3H13c.3 3.500 3 5 6.500 5 2.300 0 4.200-.6 5.700-1.500v4.300C23.500 26.700 21 27.300 18 27.300c-6.500 0-10.200-3.800-10.200-9 0-3.600 2-6.500 5.200-8C9.800 10.600 7.500 12.500 6 15zM13 14h7.700c0-2.500-1.200-4-3.500-4-2.400 0-3.900 1.700-4.200 4z" fill="#0078d7" /></svg>
      </TaskSlot>
      <TaskSlot $gap={1}>
        <svg width="32" height="32" viewBox="0 0 32 32">
          <defs><linearGradient id="fox" x1="0" y1="1" x2="1" y2="0"><stop offset="0" stopColor="#e31587" /><stop offset=".45" stopColor="#ff5a1f" /><stop offset="1" stopColor="#ffe226" /></linearGradient></defs>
          <circle cx="16" cy="17" r="9" fill="#1b4fc0" /><path d="M7 9c1 1 2 1.500 4 1.500 2-1 4-.5 4-.5-2 1.500-2.500 3-1 4.500 1 1 3 .5 2.500 2-1.500 1-3 1-4 2.500 2 3 6 2.500 8 .5 2.500-3.500.5-8-3.500-10.500C17 6 18 4.500 19 4c3 2 8 6 8 13 0 6-5 10.500-11 10.500S5 23 5 16.500C5 13.500 6 11 7 9z" fill="url(#fox)" />
        </svg>
        <Running $w={40} $stack />
      </TaskSlot>
      <TaskSlot $gap={1} $active><Gear size={32} zoom={0.88} /><Running $w={48} /></TaskSlot>
      <TaskSlot $gap={1}>
        <svg width="32" height="32" viewBox="0 0 32 32">
          <path d="M5 5h15l7 7v15H5z" fill="#fffdf8" stroke="#c99b17" strokeWidth="1.600" />
          <path d="M20 4h7.500v7.500z" fill="#d6a400" />
          <path d="M18.500 4l9.500 9" stroke="#222" strokeWidth="1.500" />
          <path d="M13 6v4M11.800 10h2.400v5h-2.400zM13 15v9M7 19h4M11 17v4M13 16h6" fill="none" stroke="#c06a3c" strokeWidth="1.200" />
          <circle cx="21" cy="16" r="2" fill="none" stroke="#c06a3c" />
          <path d="M16 20h9v5h-9zM19 20v2.500M22 20v5M16 22.500h3" fill="none" stroke="#c06a3c" strokeWidth="1.200" />
        </svg>
        <Running $w={40} $stack />
      </TaskSlot>
      <TaskSlot $gap={1}>
        <svg width="32" height="32" viewBox="0 0 32 32">
          <path d="M21.500 4l6 2.500v19L22 28 8 24.500v-.8l13.500.6z" fill="#0078d0" />
          <path d="M6 11.500l9.500 8.500M6 19l12.500-8.500v10.500L8 12" fill="none" stroke="#0e86d8" strokeWidth="2.200" />
        </svg>
        <Running $w={40} />
      </TaskSlot>
      <TaskSlot $gap={1}>
        <svg width="32" height="32" viewBox="0 0 32 32">
          <defs><linearGradient id="pad" x1="0" y1="0" x2="1" y2="1"><stop offset="0" stopColor="#d4eef2" /><stop offset="1" stopColor="#3f98aa" /></linearGradient></defs>
          <path d="M24 5l2.500 1v18l-7 2.500z" fill="#d8d2c2" /><path d="M11 5.500L25 5l-6 21.500L4 23z" fill="url(#pad)" /><path d="M11 5.500L25 5l-.5 1.500-14 .5z" fill="#e8e8e0" />
        </svg>
        <Running $w={40} />
      </TaskSlot>
      <TaskSlot $gap={1}>
        <svg width="32" height="32" viewBox="0 0 32 32"><path d="M6.500 26V14q0-6 6-6h8M9.500 26V18q0-3 3-3h3" fill="none" stroke="#000" strokeWidth="2" /><circle cx="22" cy="8" r="1.500" fill="#fff" /><circle cx="17" cy="15" r="1.100" fill="#eee" /></svg>
        <Running $w={40} />
      </TaskSlot>

      <Tray>
        <svg width="140" height="40" viewBox="1628 1040 140 40" fill="none" stroke="#fff" strokeWidth="1.200">
          <circle cx="1638" cy="1061" r="2.600" /><path d="M1634 1067q0-3.500 4-3.500t4 3.500" />
          <circle cx="1644.500" cy="1055.500" r="3" /><path d="M1642 1060q2-1.500 3.500-1 2.500.5 2.800 3.500" />
          <path d="M1671.500 1063l5.500-5.500 5.500 5.500" />
          <path d="M1698 1055.500h10.500v8h-12.500v-2.500M1702.500 1063.500v3M1698 1066.500h8M1694 1055.500h3.500v3.500h-3.500zM1695.700 1059v7" />
          <path d="M1717.500 1058h2.500l3.500-3.500v11.500l-3.500-3.500h-2.500zM1726 1057.500q1.500 2.500 0 5M1728.500 1056q2.500 4 0 8M1731 1054.500q3 5.500 0 11" />
          <path d="M1745 1065.500q-3.500 0-3.500-3.300 0-2.700 3-3.200.5-4 4.500-4 3.500 0 4.500 3 3.500.2 3.500 4 0 3.500-3.500 3.500z" fill="#fff" />
          <path d="M1746.300 1061q.8-2.500 3.500-1.500M1752 1060.500q-.8 2.700-3.500 1.800" stroke="#111" strokeWidth="1.500" />
        </svg>
        <TrayText $w={32} $ml={-6}>POR<br />PTB2</TrayText>
        <TrayText $w={64} $ml={5}>12:04<br />01/05/2019</TrayText>
        <svg width="46" height="40" viewBox="0 0 46 40" fill="none" stroke="#fff" strokeWidth="1.200"><path d="M16.500 13.500h15v12h-4.500l-3 3-3-3h-4.500z" /></svg>
        <ShowDesktop />
      </Tray>
    </Taskbar>
  </Window>
);

export default App;
